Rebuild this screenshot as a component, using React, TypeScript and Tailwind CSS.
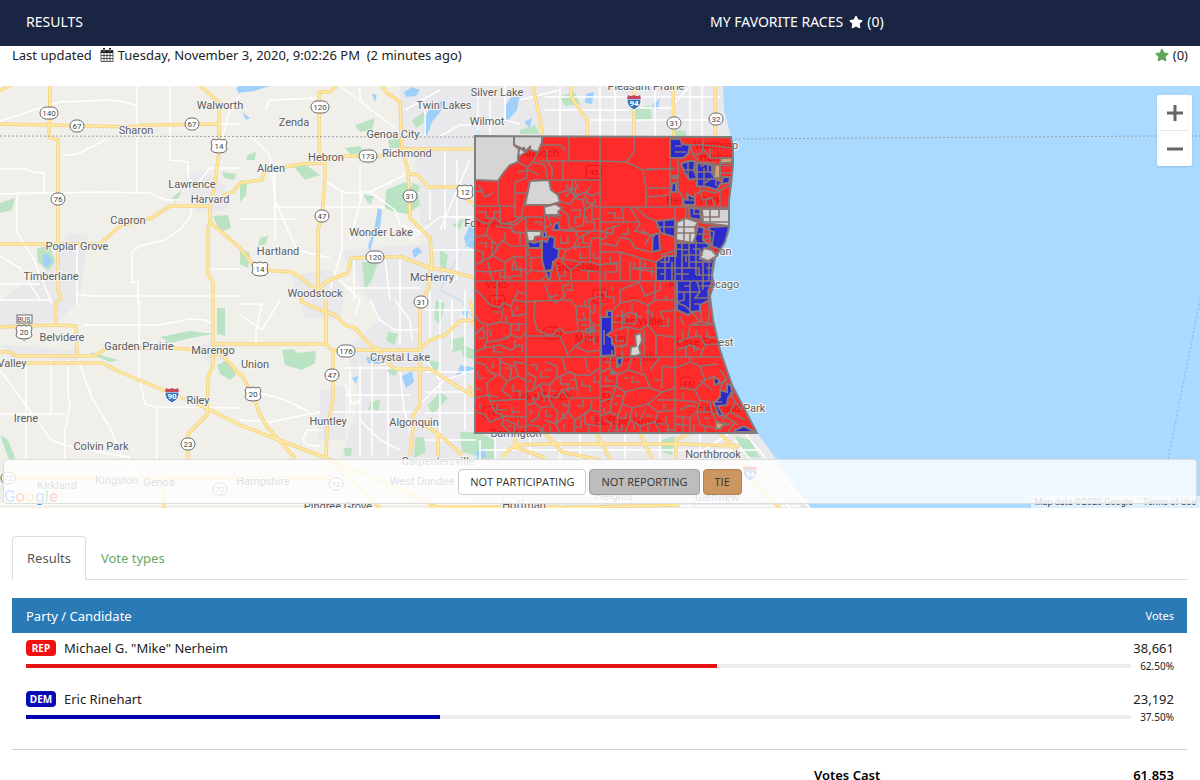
import React, { useState } from 'react';
import { FaStar } from 'react-icons/fa';

type Tone = 'rep' | 'dem';
type ShieldKind = 'state' | 'us' | 'interstate';

interface Candidate {
    party: string;
    name: string;
    votes: string;
    percent: number;
    tone: Tone;
}

const candidates: Candidate[] = [
    { party: 'REP', name: 'Michael G. "Mike" Nerheim', votes: '38,661', percent: 62.5, tone: 'rep' },
    { party: 'DEM', name: 'Eric Rinehart', votes: '23,192', percent: 37.5, tone: 'dem' },
];

const badgeTone = { rep: 'bg-[#f01010]', dem: 'bg-[#0a0ab4]' };
const barTone = { rep: 'bg-[#e81313]', dem: 'bg-[#0202ae]' };

// [text, center x, baseline y]
const towns: [string, number, number][] = [
    ['Walworth', 220, 109], ['Sharon', 136, 134], ['Zenda', 294, 126], ['Silver Lake', 497, 96],
    ['Twin Lakes', 444, 109], ['Wilmot', 487, 125], ['Pleasant Prairie', 646, 90], ['Genoa City', 393, 138],
    ['Hebron', 326, 161], ['Richmond', 407, 157], ['Alden', 271, 172], ['Lawrence', 192, 188],
    ['Harvard', 210, 203], ['Capron', 128, 224], ['Wonder Lake', 381, 236], ['Hartland', 278, 255],
    ['Poplar Grove', 77, 250], ['Timberlane', 51, 280], ['McHenry', 432, 281], ['Woodstock', 315, 297],
    ['Belvidere', 62, 341], ['Garden Prairie', 139, 350], ['Marengo', 213, 354], ['Valley', 12, 367],
    ['Union', 255, 368], ['Crystal Lake', 400, 361], ['Riley', 198, 404], ['Irene', 26, 422],
    ['Huntley', 328, 425], ['Algonquin', 414, 426], ['Colvin Park', 101, 450], ['Carpentersville', 438, 465],
    ['Kirkland', 57, 489], ['Kingston', 117, 484], ['Genoa', 159, 486], ['Hampshire', 263, 485],
    ['West Dundee', 422, 485], ['Pingree Grove', 338, 510], ['Hoffman', 524, 509], ['Heights', 614, 500],
    ['Glenview', 717, 501], ['Northbrook', 713, 458], ['Barrington', 516, 437], ['Antioch', 540, 157],
    ['Fox Lake', 486, 227], ['Volo', 496, 288], ['Grayslake', 578, 271], ['Mundelein', 600, 342],
    ['Lake Zurich', 543, 400], ['Buffalo Grove', 628, 425], ['Libertyville', 636, 325], ['Vernon Hills', 630, 361],
];

// names that run out over the lake
const shoreTowns: [string, number, number][] = [
    ['Winthrop', 716, 149], ['Harbor', 716, 161], ['Beach Park', 694, 204], ['Waukegan', 706, 255],
    ['North Chicago', 704, 288], ['Lake Forest', 705, 346], ['Highland Park', 731, 412],
];

const shields: [ShieldKind, string, number, number][] = [
    ['state', '140', 49, 113], ['state', '67', 77, 126], ['state', '67', 192, 124], ['us', '14', 219, 146],
    ['state', '76', 58, 199], ['state', '120', 320, 107], ['state', '173', 368, 156], ['state', '31', 410, 196],
    ['us', '12', 465, 192], ['state', '47', 322, 216], ['state', '120', 375, 257], ['us', '14', 260, 269],
    ['state', '31', 421, 302], ['us', '20', 24, 332], ['state', '176', 346, 351], ['state', '47', 332, 375],
    ['us', '20', 253, 394], ['interstate', '90', 172, 395], ['state', '23', 188, 444], ['state', '72', 8, 478],
    ['state', '72', 220, 489], ['state', '72', 336, 484], ['interstate', '94', 634, 102], ['state', '31', 674, 123],
    ['state', '32', 716, 119], ['us', '45', 594, 172], ['us', '12', 497, 302], ['us', '45', 600, 296],
    ['state', '176', 552, 333], ['us', '14', 491, 413], ['state', '83', 606, 395], ['state', '43', 687, 383],
    ['interstate', '94', 750, 473],
];

const highways = [
    'M0 91L12 84', 'M50 86L49 137L58 140V290L61 298L56 303V326', 'M0 124L50 125L130 127L150 125L219 124',
    'M200 86L219 102V150L215 185L210 205V222L208 228V275L213 282V365L208 378L207 415L188 434V459',
    'M0 244H100L120 226L152 218L170 206H208M222 196L234 191L240 183L262 180L264 172L300 164L325 163',
    'M210 222L225 235L240 248L252 264L262 270L292 272L300 277L316 290',
    'M336 86L330 92H319V150L325 160V180L322 215L318 230V290',
    'M325 160L345 156H385L404 149H475', 'M382 86L387 93L400 102L402 150L408 170L410 218L430 238L432 262L428 290L420 304',
    'M408 174L418 175L428 187L465 187L468 200L476 206',
    'M318 290L325 282L348 273L351 258L375 257H402L430 268L445 270L475 278',
    'M326 300V343L333 352V400L327 430L326 457', 'M213 344H326M333 350H419L430 340L445 335L460 321L470 320L477 328',
    'M300 290L302 302L318 309L335 315L345 325L355 328L370 345L378 349L390 365L395 369H430L476 398',
    'M420 304V405L413 415V430L410 455', 'M240 372L252 393L260 415L268 428L295 458',
    'M0 363H102L120 372L168 392L210 410L240 425L326 458L390 485L440 508',
    'M0 327L55 325L76 326L77 356M0 352H10L16 356H95L105 349L175 348L195 350L222 355L240 375',
    'M425 425L440 435L462 455M438 433V457', 'M326 457L340 470L380 508M0 478H120H330',
    'M533 86L537 105L543 136', 'M571 86V97L587 120V136', 'M634 86V136', 'M673 86L674 136', 'M715 86V136',
    'M502 457L515 445L545 444H680L740 446', 'M515 433V447L545 458', 'M545 433L562 452L600 460',
    'M596 433L610 459', 'M640 433L652 459', 'M676 459V440L690 433', 'M720 433L736 450L750 480L780 508', 'M430 507H560M545 508L680 505',
    'M164 480V508', 'M470 300L476 325M468 385L476 398',
];

const minorRoads = [
    'M0 121L40 108L60 102L110 100L125 102L137 106V192M137 192V86', 'M170 86V160L188 162V178L196 185L210 168H240',
    'M62 155H72L82 152L105 140', 'M0 169H26L32 172L44 173V193H17V232L34 260L52 304', 'M0 194L100 192L150 193L165 200H180',
    'M191 208V215L182 228L165 240L140 246L132 252V282H138V304', 'M77 243V304M77 294L90 296H240M209 269H240',
    'M0 256L20 268L40 300M0 284H40M0 300H50', 'M68 360V394L70 405L65 430V459M26 360V459M51 360V414M0 414H66',
    'M0 370L22 400L52 441L76 448L128 457L140 480', 'M78 360L92 398L110 428L122 457', 'M139 300V378L145 404L155 407L240 408M157 407V459',
    'M83 325L160 325L190 319L205 320L213 324', 'M221 124H240M219 150L230 110L240 95', 'M265 110L270 100L320 98',
    'M250 135L270 155L275 200L290 235L297 250L330 258', 'M325 181L345 193L370 192L405 175M342 194V250L330 290M350 240L363 192',
    'M370 192L395 210L400 225L430 235M360 200V165', 'M340 86L365 105L395 128M360 86V100', 'M273 207H385M275 165V240M240 219H295M240 304H262L256 330V345',
    'M354 258V300M340 280L360 300L355 316', 'M405 110L440 90M425 110V136M440 136L460 125H475', 'M430 220V190M445 150V230M457 160V280',
    'M440 230L470 160M410 240L440 217H475M432 250H475', 'M345 288H420M385 258L390 300M400 258V345M370 300L380 320L395 330H420',
    'M345 368H420M350 370V412M360 365V455M372 355V455M388 372V455M400 372L404 410L410 430', 'M330 412H420M345 395H410M345 384L352 404L362 400',
    'M430 290V340M440 300V440M452 300V350M465 290V430M425 310H475M425 372H476M425 392H476M425 413H476M425 440H476',
    'M419 350L440 380M395 300L410 320L412 340M419 405L445 380L475 370', 'M240 420L270 422L320 412M260 393L285 400L310 412',
    'M322 430L308 430Q300 440 306 445L320 446M360 420L380 440L400 450', 'M240 315L262 330M280 300L262 330',
    'M478 86V130M490 100V136M505 86V120L520 124M520 100L560 90M545 110H630M560 86V136M600 86V136M615 86V136M655 86V136',
    'M545 97H720M590 120H720M640 108H670L690 86M690 136V86M702 86V136', 'M480 440V459M495 433V459M530 433V459M560 440V459M580 433V459',
    'M480 450H760M625 433V459M660 433V459M700 433V459M690 459L730 433', 'M745 433L775 470L810 508M735 440L765 480L790 508', 'M0 504H500M600 506H800M560 459V508M690 459V508',
];

const parks = [
    'M386 190L405 182L417 188L420 205L408 214L395 212L385 208Z', 'M0 203L15 198L12 210L0 213Z', 'M37 248L50 246L55 262L48 271L38 262Z',
    'M213 216L228 215L231 228L220 232Z', 'M172 198L182 190L176 203Z', 'M90 160L94 155', 'M217 308H225V336L217 334Z',
    'M217 365L228 360L236 375L230 380L220 374Z', 'M160 337L190 331L213 334L190 338L170 343Z', 'M90 352L118 360L110 362L95 356Z',
    'M282 350L294 349L297 353L316 351L315 363L302 370L285 365Z', 'M294 167L306 165L320 175L305 180Z', 'M240 248L250 253L248 268L240 264Z',
    'M248 155L256 152L255 160H246Z', 'M345 148L360 146L364 153L350 154Z', 'M388 140L400 138L402 148L390 148Z', 'M355 125L375 118L372 130L360 132Z',
    'M410 182L420 186L418 192Z', 'M363 195L374 196L370 205Z', 'M362 262L378 262L372 280L365 290Z', 'M415 438L424 437L426 452L414 458Z',
    'M460 432L478 432V456L462 452Z', 'M428 405L440 392L448 398L432 415Z', 'M388 332L398 334L394 345L386 340Z', 'M450 340L466 336L462 350L452 352Z',
    'M370 402L380 400L379 410L368 410Z', 'M344 448L352 448L351 456L345 456Z', 'M436 300L445 304L440 325L434 318Z', 'M462 345L476 350V360L462 356Z',
    'M478 432L495 440V459H476Z', 'M634 110L650 105L652 120L632 120Z', 'M520 130L535 125L540 134H520Z', 'M560 96L575 92L580 104L565 106Z',
    'M661 440L675 436L672 455L662 452Z', 'M735 436L750 440L760 458L745 456Z', 'M0 435L8 440L16 460L10 462Z', 'M672 130L686 131V136H673Z',
    'M412 120L424 112L430 118L416 128Z', 'M222 172L236 174L234 180L224 178Z', 'M16 336L30 335L25 342Z', 'M430 360L440 363L436 372L428 370Z', 'M389 366L398 367L396 376L388 374Z',
    'M240 180L247 183L246 195L240 202Z', 'M260 238L268 236L266 244L258 246Z', 'M440 250L448 255L446 270L440 266Z', 'M452 225L464 218L460 230Z',
];

const lakes = [
    'M238 86H270L254 91L238 93Z', 'M424 118L432 105L445 100L440 112L432 122L427 136L424 132Z', 'M506 105L512 96L520 92L517 110L510 118L506 122Z',
    'M404 92L412 87L420 90L416 96L406 97Z', 'M378 208L382 210L380 228L374 236L370 252L368 246L374 230Z', 'M42 255L48 254L52 263L45 268Z',
    'M412 250L418 247L422 252L414 258Z', 'M470 225L476 222V250L466 246L464 238Z', 'M402 376L412 371L414 382L406 388Z', 'M366 357L382 357L380 364L368 363Z',
    'M462 312L470 308L466 320Z', 'M460 365L476 368V372L456 376Z', 'M372 94L377 95L375 102Z', 'M650 108L660 98L658 110Z', 'M242 112L250 118L246 120Z',
    'M586 94L594 92L592 104L585 103Z', 'M236 88L240 86V94Z', 'M352 378L358 376L356 384Z', 'M524 122L532 118L530 128Z', 'M476 452L484 448L486 458H478Z',
];

const urban = [
    'M44 270L70 232L88 236L80 300L60 320L0 330V345L80 350L78 360L10 358L0 345V300Z', 'M185 175L205 170L225 185L228 210L195 212Z',
    'M290 275L330 270L345 290L340 320L305 318Z', 'M400 86H476V290H445L420 220L415 160L398 150Z', 'M340 250L476 240V459H340L360 400L345 350L380 320Z',
    'M476 86H723L731 137H476Z', 'M476 433H757L811 508H476Z', 'M320 390L345 385V440L318 440Z', 'M198 345L225 340L228 360L205 362Z',
];

const COUNTY = 'M475 136L731 137L733 150V165L731 185L729 200V228L725 242L715 258L712 275L714 284L710 296L713 320L720 350L732 385L745 410L757 433H475Z';

const demAreas = [
    'M670 139H680L682 144L690 145L688 154L683 158H670Z', 'M681 164L688 161H695L694 170L697 178L690 180L685 173Z',
    'M697 163L712 165L714 178L722 182L723 177H730L729 183L720 184L717 190L708 187L697 186Z', 'M683 199L688 200L687 194L695 198V205H684Z',
    'M672 184L676 182V192H671Z', 'M672 176H677V178H672Z', 'M689 208L700 209L701 220L690 218Z', 'M656 221L675 219V237L661 233Z',
    'M653 235L659 233L660 250L652 252Z', 'M656 262L665 256H676V243L694 242L698 226L704 228L703 240L710 246L702 252L700 259L708 261L714 258L712 275V282L708 292L709 300L700 305L700 311L692 312L688 315L677 310V281H656Z',
    'M709 227L729 226L728 235L722 250L711 246Z', 'M607 311H612V331L607 335L612 338V344L615 346V355L601 356V317H607Z',
    'M586 329L592 328V332L587 333Z', 'M617 359L623 357L621 365L617 367Z', 'M611 372H615V374H611Z', 'M555 224L558 222L560 230H553Z',
    'M543 232H546V237H543Z', 'M527 241L534 243L541 241L540 248L529 248Z', 'M542 240L547 242L549 236L555 238L554 247L559 250L558 258L553 262L552 270L545 272L542 260Z',
    'M546 271L551 270L550 279H548Z', 'M714 377L719 380L718 384L714 385Z', 'M727 384L731 385L732 392L728 398L727 405L718 406L723 415L719 416L714 403L720 397V390L727 392Z', 'M735 430L744 426L755 432H735Z',
];

const inactiveAreas = [
    'M475 136H514V145L519 149L518 162L510 165L504 172L498 181L475 180Z', 'M514 136H542V142L538 152L530 150V147L525 152L519 147L514 145Z',
    'M530 181L549 180L551 190L558 195L560 202L550 205H525Z', 'M544 207L555 204L562 208L558 212L560 215L545 215Z',
    'M526 231H541V236L535 237L534 241H528Z', 'M702 209H729V226L703 223Z', 'M677 222L686 218L698 222L695 228L696 235L693 243L676 240Z',
    'M702 252L704 248L712 250L717 256L708 261L700 258Z', 'M630 356L631 347L636 346L635 335L641 333L642 341L639 347L641 354L636 356Z',
    'M518 157L526 152L524 148L519 149Z',
];

const tieAreas = ['M721 158H732V163H720Z', 'M715 165H720V178H714Z', 'M716 421L720 423L730 424L722 426L721 429H716Z'];

const precinctLines = [
    'M600 136V433M526 231V433M675 206V433M475 206H515M475 281H712M475 357H722M600 207H729M540 161H600M569 136V161M535 180H600M564 231H600',
    // northwest
    'M498 181V205M475 191L483 192L485 197L493 193M483 192L478 185M518 162L527 167V178L515 182V193H526M515 193V217H526M500 206V224L514 222L521 217L530 181',
    'M528 167L533 162L545 165L547 178M533 162L538 152M547 150V161L552 168V178M541 145H560L565 150M563 161V180M518 172L530 170L538 175',
    'M475 217L481 222L489 224L495 217L500 223L515 225L526 217H543M489 224L486 235L475 237M495 226L510 228L516 233L526 233M486 235L498 246L503 240L510 246H526',
    'M475 250L483 252L482 262L475 265M492 240V256L483 261M498 246L493 256L505 262L515 256L526 258M505 262V281M488 262L490 272L505 270M475 271L490 272L493 281M515 256L512 270H526',
    'M549 180H572V190L565 197M558 193L570 190L575 197L585 192L592 196L600 192M560 202L570 204L574 198L583 200L585 210L592 205L600 208M562 210L568 215L570 230M585 210L583 225L570 229M592 205V219H600M583 200L590 186M575 180L578 190',
    'M561 218L545 215V231M526 217V231M548 216L551 225L543 228M560 230H575L578 238L574 247H590L592 238L600 238M578 238L590 232M574 247L566 250L558 248M590 247V262L600 265M566 250L562 262L571 270L582 262H590M571 270V281M559 258L580 262',
    'M526 248L531 258V270L526 275M531 258L542 257M531 270L545 272M555 262L560 281M580 270L600 272M540 281L547 275M575 250L580 243',
    'M477 212H486V218H494V212H500M505 232V240M512 226V232H520V244M478 243H486V248M500 272V277H510V281M516 262V268H521V276H512M534 222H541V226M567 184V188H575V194H580M587 197V203H595V199M572 210H580V217H575V224M586 216V222H594V230M583 236V243H588M568 236V243H561V237M580 252V258H587M565 270V276H558M588 270V281M594 252V258H600',
    // north centre
    'M634 136V152L626 162L643 170L646 188V206M646 169H675M648 188H670V195L646 197M670 160V206M643 170L675 168M626 162L600 161M678 158V190L682 196V206M690 145L693 155L702 153L704 137M690 145H704L731 148',
    'M693 155L700 162L716 163M704 150L710 158H721M710 148V158L732 158M697 163V186M704 168V186M712 165V175M697 172H712M697 179H714M705 183L712 178M720 165L731 166M720 173H731M730 185L715 193L705 190L695 194M700 186L702 200L712 198L715 206M695 194V206M720 190V206M706 200V206',
    'M630 207L640 224L635 231L655 236M635 207L648 218L656 221M600 222H640M622 207L624 222M620 237L616 246L600 243M620 237L630 240L635 248L650 252M641 229L650 236L645 245M600 252H620L640 258L655 262M620 252V281M640 258V281M606 229V238L600 240M606 229L620 225',
    'M600 265L620 262M630 268L655 272M630 262V281M600 231L612 234L614 226M607 213H615V218H622M610 256V264H617V272H605V281M645 262V268H652V276M628 228V234H622M634 262V268H645',
    'M683 170H694M688 161V178M675 146H682M675 152H686M716 178V186M708 163V172M700 166H704M690 200H695M686 208V218M694 208V214H701',
    // Waukegan area
    'M677 227H696M677 233H696M684 218V243M690 233V243M702 208V222M710 209V225M698 222H729M656 227H675M664 221V235M675 243H709M661 255L676 250M665 256V281M656 268H700M672 262V281M682 243V281M689 243V268M696 240V275M703 262V281M709 261V281M682 255H703M676 249L689 250M689 262H712M696 275H712M704 228L714 232L712 246M698 234H710M702 240L712 238M677 292H700M690 281V312M697 281L700 292L695 298H709M700 286H712M703 281V290M684 292V300L677 302',
    'M719 209V217H703M669 256V262H660M676 274H689M686 255V262M693 249H700V255M706 268H712M699 268V275M684 286H690M694 304H700M660 274H665',
    // middle west
    'M475 289L482 296L490 305L500 308L503 303L511 306L514 300L526 302M497 281V300M503 308L501 322L511 324V335L500 340L487 342L484 348M488 325L501 322M488 325L487 342M475 335L484 326M475 315L480 322L488 325M511 324H526M511 335L520 338L526 332M511 306L513 316L526 314M484 348L475 352M484 348L500 345L511 350L520 344M514 300L518 292L526 294M505 340L511 335',
    'M526 302L535 301L534 316L537 330L551 336L560 328L565 333L578 331L576 306L570 300L535 301M560 336L569 357M560 336H526M578 306L590 307L588 300L600 296M578 320L590 320L594 326L600 325M578 331H600M590 307V336M583 331L584 340L575 346L588 352L600 350M575 346L570 352M585 320L583 312M545 283L549 297L556 303L565 296L562 287L570 283M549 297L558 295M594 326V345',
    'M478 330H484V338H478M491 330V336M494 347V352H503M515 340V346H522V352M506 316V322M517 306V311M519 324V330H514M493 312H500M585 300V306M582 325H588M595 304V312H590M588 340H595M566 290H572V283',
    // southwest
    'M475 362L485 365L490 372L497 375L487 383L488 395L498 397M500 357V375L507 381L502 390L512 398M507 381L518 376L514 362L526 364M518 376L526 381M488 395L475 398M488 395L490 401L526 399M501 362L512 366L510 378M490 401L495 412L504 416L502 425L510 432M504 416L526 417M475 412L484 414L490 422L504 416M475 388L482 390M505 420L515 424L514 433M526 372L536 378L533 390L540 384H550L557 378V366L545 362M557 378L570 372L575 375H590L600 368M550 384L549 396L557 398L562 390L568 398M540 384L543 396H549M526 405L535 403L540 408L552 406L558 412L556 424M540 408L538 418L530 422M552 406L548 396M570 398H600M570 398L568 412L575 420L574 432M568 412L556 424L545 420M556 424L560 433M575 420L590 410L592 400M533 390L526 392M575 375L578 395M562 357L566 372M585 357L588 372M545 424L540 433M526 425L538 426L545 433M585 412V424L600 426M535 403L533 396M562 390L575 388M590 410L600 412M562 404L570 407',
    'M478 370V378H484M493 362V368M505 368H510M513 384V391H520V397M480 404V409M497 404V410H507M512 407V412H520M507 426H512M518 420V427H526M530 365H537V371M541 371V377H549M532 381H528M538 392V399H531M544 402V396M551 391H556M561 378V384H568V392M570 380H576M582 380V386H590V392M583 400V406H577M594 376V382H600M531 410V415M546 410V416H552M563 412V418H568M564 424V430M581 418V427H575M592 416V421M589 426V433M550 426V433M545 370H552',
    // centre and southeast
    'M612 311L620 303V290L630 286L640 282M620 303L635 300L648 305L655 300H675M640 285L645 296L660 290V281M648 305V325L656 335L675 337M648 325L640 330L628 327L615 330M620 316L630 312L642 318M628 327L627 345L620 348M615 346L627 345M656 335V357M644 330V357M664 320L660 312L675 310M675 302L685 306L692 312L700 322L690 325L688 338L678 342M700 305L702 322L713 324M690 325H713M688 338L700 336L705 345L718 344M705 345L700 357M678 350L690 345L700 350M683 338V330M709 300V322M680 316L684 325M655 300V281',
    'M602 317H612M615 316H630M622 310V330M612 322L636 324M604 330V345M616 334V341H624M632 303V310M636 312V323M624 318V322M606 290V297H614V304M606 304H600M612 286V290M645 312H652V318M666 296V301M668 318V326H660M680 348H686V357M696 330V336M694 345V352M707 330V337H715M612 350V357M622 350V356',
    'M601 372L610 368L618 374L628 370L645 375L650 388L662 392L675 388M610 368V357M628 370L632 357M618 374L616 386L625 392L640 388L650 388M601 386L616 386M616 386L612 398L600 402M625 392L622 404L632 408L648 404L655 398L662 392M632 408L630 420L640 426L655 422L658 412L648 404M612 398L610 412L618 416L622 404M618 416L616 433M610 412L600 416M630 420L625 433M655 422L660 433M658 412L675 410M658 400H675M640 426V433M645 410L640 420M605 420L612 424L608 433M662 366L675 368M650 370L660 357M640 357L642 372M662 366V388',
    'M675 368L690 362L700 366L705 380L695 390L700 400L710 402M705 380L715 376M700 366L718 364M690 362V357M695 390L680 388M700 400L697 412H712L716 420M697 412L690 418V433M690 418L675 416M697 412L700 425L715 428M675 400L697 402M710 402L712 412M712 390L700 380M720 370L726 378L720 388M730 392L735 402L730 412L745 420M723 415L738 425M730 412L722 420M705 425V433M680 410L690 405M675 424L690 426M683 433V418M735 402L742 410M728 398L735 392M712 402L722 402M715 385L727 380M728 432L735 422',
    'M606 376V381H612M632 376V382H640M606 392H612M616 396H622M604 408V412M614 404H618M626 412V418H620M636 412V418M646 416H652M622 424V430H614M634 424V430M648 426V433M664 404V410M666 416V424H658M668 424V433M665 430H675M683 393V400M688 406H696M704 406V412M704 418H710M694 424V433M711 414H718M624 378H628M654 380H660M618 362V368M604 362H610',
];

function Shield({ kind, label, x, y }: { kind: ShieldKind; label: string; x: number; y: number }) {
    const half = label.length > 2 ? 9 : 7;
    if (kind === 'interstate') {
        return (
            <g transform={`translate(${x} ${y})`}>
                <path d="M-7 -3Q-8 4 0 8Q8 4 7 -3Z" fill="#3a73b9" stroke="#ffffff" />
                <path d="M-6 -7Q-3 -5 0 -7Q3 -5 6 -7L7 -3H-7Z" fill="#c8475a" />
                <text y="4" textAnchor="middle" fontSize="8" fontWeight="700" fill="#ffffff">{label}</text>
            </g>
        );
    }
    return (
        <g transform={`translate(${x} ${y})`}>
            {kind === 'state' ? (
                <rect x={-half} y="-6" width={half * 2} height="12" rx="6" fill="#ffffff" stroke="#6b6b6b" />
            ) : (
                <path d="M-6 -7Q-3 -5 0 -7Q3 -5 6 -7L8 -4Q6 0 8 4Q6 7 0 7Q-6 7 -8 4Q-6 0 -8 -4Z" fill="#ffffff" stroke="#6b6b6b" />
            )}
            <text y="3" textAnchor="middle" fontSize="8" fill="#444444">{label}</text>
        </g>
    );
}

function TownLabels({ items }: { items: [string, number, number][] }) {
    return (
        <g fontSize="11" fill="#5c5c5c" stroke="#f5f5f5" strokeWidth="2" strokeLinejoin="round" paintOrder="stroke" textAnchor="middle">
            {items.map(([name, x, y]) => (
                <text key={name} x={x} y={y}>{name}</text>
            ))}
        </g>
    );
}

function PrecinctMap() {
    return (
        <svg
            className="block h-full w-full font-[Roboto,sans-serif]"
            viewBox="0 86 1200 422"
            preserveAspectRatio="xMidYMid slice"
            role="img"
            aria-label="Precinct results map"
        >
            <rect y="86" width="1200" height="422" fill="#f0efea" />
            <path d={urban.join('')} fill="#e9e9eb" />
            <path d={parks.join('')} fill="#b9e3c3" />
            <path d={lakes.join('')} fill="#9fd0fb" />
            <path d="M478 86V130L488 210L470 240L455 262L440 290L460 300L475 320" fill="none" stroke="#b7dcfa" />
            <path d={minorRoads.join('')} fill="none" stroke="#ffffff" strokeWidth="1.5" />
            <path d={highways.join('')} fill="none" stroke="#f6d582" strokeWidth="3.5" strokeLinejoin="round" />
            <path d={highways.join('')} fill="none" stroke="#ffeba9" strokeWidth="1.5" strokeLinejoin="round" />
            <path
                d="M723 86L724 110L731 137L733 150V165L731 185L729 200V228L725 242L715 258L712 275L714 284L710 296L713 320L720 350L732 385L745 410L757 433L777 460L790 480L811 508H1200V86Z"
                fill="#aadaff"
            />
            <path d="M0 136L475 137M735 139L1157 136H1200" fill="none" stroke="#9aa3aa" strokeDasharray="2 2" />
            <path d="M1200 300L1168 460L1158 508" fill="none" stroke="#8fb4d2" strokeDasharray="2 2" />
            <TownLabels items={towns} />
            <TownLabels items={shoreTowns} />
            {shields.map(([kind, label, x, y]) => (
                <Shield key={`${label}-${x}-${y}`} kind={kind} label={label} x={x} y={y} />
            ))}
            <rect x="17" y="315" width="15" height="8" fill="#ffffff" stroke="#6b6b6b" />
            <text x="24" y="322" textAnchor="middle" fontSize="7" fill="#444444">BUS</text>

            <clipPath id="county"><path d={COUNTY} /></clipPath>
            <g clipPath="url(#county)">
                <path d={COUNTY} fill="#ff0303" fillOpacity="0.83" />
                <g stroke="#8b7676" strokeWidth="2">
                    <path d={demAreas.join('')} fill="#2b2bcd" />
                    <path d={inactiveAreas.join('')} fill="#d5d5d5" />
                    <path d={tieAreas.join('')} fill="#cfa377" />
                    <path d={precinctLines.join('')} fill="none" strokeWidth="1.6" />
                </g>
            </g>
            <path d={COUNTY} fill="none" stroke="#808080" strokeWidth="2" />

            <text x="4" y="502" fontSize="17" fontWeight="500" stroke="#ffffff" strokeWidth="2" paintOrder="stroke">
                <tspan fill="#4285f4">G</tspan>
                <tspan fill="#ea4335">o</tspan>
                <tspan fill="#fbbc05">o</tspan>
                <tspan fill="#4285f4">g</tspan>
                <tspan fill="#34a853">l</tspan>
                <tspan fill="#ea4335">e</tspan>
            </text>
        </svg>
    );
}

function CalendarIcon() {
    return (
        <svg className="mr-1 ml-2 h-[14px] w-[14px]" viewBox="0 0 14 14" aria-hidden="true">
            <path d="M1 2H13V5H1Z" fill="#222222" />
            <path d="M1 2.5H13V13.5H1ZM1 7.5H13M1 10.5H13M4 5V13M7 5V13M10 5V13" fill="none" stroke="#333333" strokeWidth="0.8" />
            <path d="M4 0V4M10 0V4" stroke="#222222" strokeWidth="2" />
            <path d="M4 1V3.5M10 1V3.5" stroke="#ffffff" strokeWidth="0.6" />
        </svg>
    );
}

export default function App() {
    const [tab, setTab] = useState('results');

    const tabClass = (name: string) =>
        tab === name
            ? 'border-[#dddddd] border-b-white bg-white text-[#555555]'
            : 'border-transparent text-[#6aa765]';

    return (
        <div className="bg-white font-['Noto_Sans','Open_Sans',sans-serif] text-[13px] leading-5 text-[#222222]">
            <header className="bg-[#1a2544] text-[14px] text-white">
                <nav className="grid h-[46px] grid-cols-12 items-center pb-0.5">
                    <a href="#results" className="col-span-7 pl-[26px]">RESULTS</a>
                    <a href="#favorites" className="col-span-5 flex items-center gap-1 pl-[10px]">
                        MY FAVORITE RACES <FaStar className="ml-0.5" /> (0)
                    </a>
                </nav>
            </header>

            <div className="flex h-10 items-start justify-between px-3 leading-[18px]">
                <p className="flex items-center">
                    Last updated <CalendarIcon /> Tuesday, November 3, 2020, 9:02:26 PM&nbsp; (2 minutes ago)
                </p>
                <p className="flex items-center gap-1">
                    <FaStar className="text-[14px] text-[#5fa75a]" /> (0)
                </p>
            </div>

            <section className="relative h-[422px] overflow-hidden font-['Open_Sans',sans-serif]">
                <PrecinctMap />
                <p className="absolute right-0 bottom-0 flex gap-2.5 bg-white/60 px-1 font-[Roboto,sans-serif] text-[9px] leading-3 text-[#444444]">
                    <span>Map data ©2020 Google</span>
                    <a href="#terms">Terms of Use</a>
                </p>
                <div className="absolute top-[9px] right-2 flex w-[35px] flex-col items-center rounded-xs bg-white shadow">
                    <button type="button" aria-label="Zoom in" className="flex h-[35px] w-full items-center justify-center">
                        <svg className="h-4 w-4" viewBox="0 0 16 16"><path d="M8 0V16M0 8H16" stroke="#666666" strokeWidth="3" /></svg>
                    </button>
                    <div className="h-px w-7 bg-[#e6e6e6]" />
                    <button type="button" aria-label="Zoom out" className="flex h-[35px] w-full items-center justify-center">
                        <svg className="h-4 w-4" viewBox="0 0 16 16"><path d="M0 8H16" stroke="#666666" strokeWidth="3" /></svg>
                    </button>
                </div>
                <div className="absolute inset-x-[3px] bottom-1 flex h-[45px] items-center justify-center gap-[3px] rounded border border-[#dddddd] bg-white/80 text-[11px] leading-4 text-[#333333]">
                    <button type="button" className="rounded border border-[#cccccc] bg-white px-[11px] py-1">NOT PARTICIPATING</button>
                    <button type="button" className="rounded border border-[#a0a0a0] bg-[#bdbdbd] px-[11px] py-1">NOT REPORTING</button>
                    <button type="button" className="rounded border border-[#b08050] bg-[#cb9660] px-[11px] py-1">TIE</button>
                </div>
            </section>

            <main className="pt-7 pr-[13px] pl-3">
                <div role="tablist" className="flex border-b border-[#dddddd]">
                    <button
                        type="button"
                        role="tab"
                        aria-selected={tab === 'results'}
                        onClick={() => setTab('results')}
                        className={`-mb-px h-11 rounded-t border px-[14px] ${tabClass('results')}`}
                    >
                        Results
                    </button>
                    <button
                        type="button"
                        role="tab"
                        aria-selected={tab === 'types'}
                        onClick={() => setTab('types')}
                        className={`-mb-px h-11 rounded-t border px-[14px] ${tabClass('types')}`}
                    >
                        Vote types
                    </button>
                </div>

                <table className="mt-[18px] w-full table-fixed">
                    <colgroup>
                        <col className="w-[75%]" />
                        <col />
                        <col className="w-[56px]" />
                    </colgroup>
                    <thead>
                        <tr className="h-[35px] bg-[#2a7ab6] text-white">
                            <th scope="col" colSpan={2} className="pl-[14px] text-left font-normal">Party / Candidate</th>
                            <th scope="col" className="pr-[13px] text-right text-[11px] font-normal">Votes</th>
                        </tr>
                    </thead>
                    <tbody>
                        {candidates.map((c) => (
                            <tr key={c.party} className="h-[51px] align-top last:h-[65px]">
                                <td colSpan={2} className="pt-[5px] pl-[14px]">
                                    <div className="flex items-center gap-2">
                                        <span className={`w-[30px] rounded text-center text-[10px] leading-4 font-bold text-white ${badgeTone[c.tone]}`}>
                                            {c.party}
                                        </span>
                                        {c.name}
                                    </div>
                                    <div className="mt-1.5 h-1 bg-[#ededed]">
                                        <div className={`h-full ${barTone[c.tone]}`} style={{ width: `${c.percent}%` }} />
                                    </div>
                                </td>
                                <td className="pt-[5px] pr-[13px] text-right">
                                    <div>{c.votes}</div>
                                    <div className="text-[10px] leading-4">{c.percent.toFixed(2)}%</div>
                                </td>
                            </tr>
                        ))}
                    </tbody>
                    <tfoot>
                        <tr className="border-t border-[#cccccc] font-semibold text-black">
                            <th scope="row" className="pt-[15px] pr-[13px] text-right font-semibold">Votes Cast</th>
                            <td colSpan={2} className="pt-[15px] pr-[13px] text-right">61,853</td>
                        </tr>
                    </tfoot>
                </table>
            </main>
        </div>
    );
}
